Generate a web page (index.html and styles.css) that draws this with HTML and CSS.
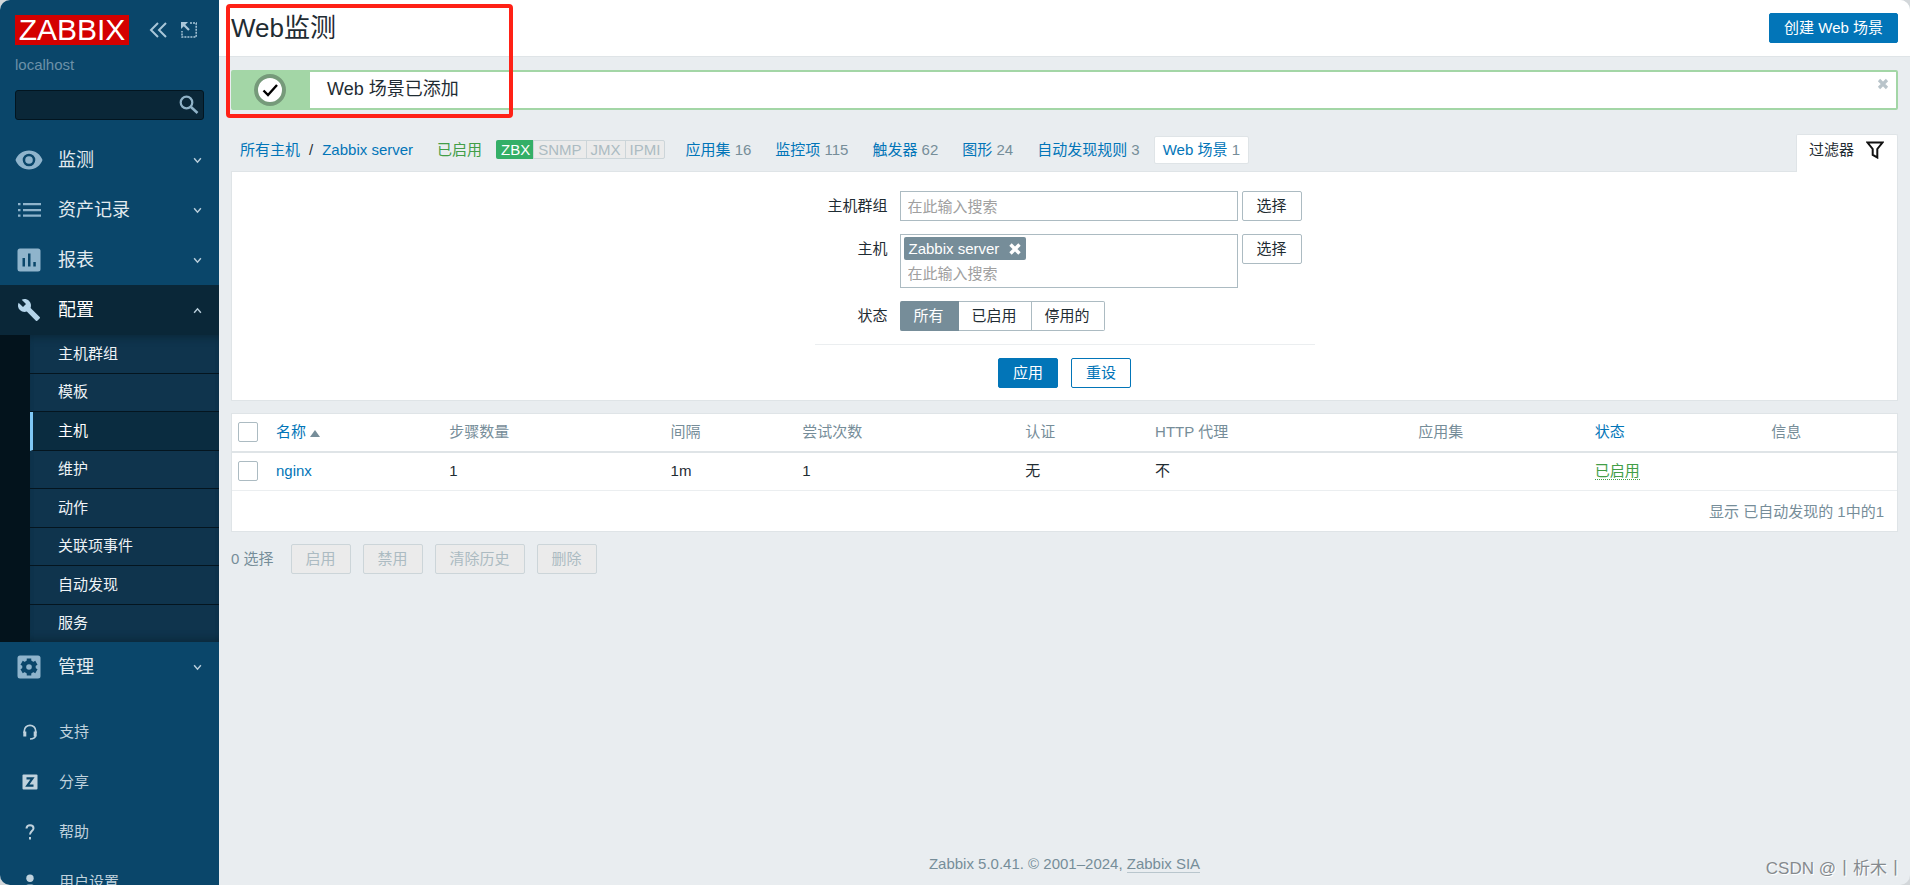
FILE: index.html
```html
<!DOCTYPE html>
<html lang="zh-CN">
<head>
<meta charset="utf-8">
<title>Web监测</title>
<link rel="stylesheet" href="styles.css">
</head>
<body>
<div class="page">
  <aside class="sidebar">
    <div class="sidebar-header">
      <a class="logo" href="#">ZABBIX</a>
      <button class="icon-button collapse" type="button" aria-label="折叠侧边栏">
        <svg width="20" height="16" viewBox="0 0 20 16" fill="none" stroke="#a9c6d8" stroke-width="2"><path d="M9 1 2 8l7 7M17 1l-7 7 7 7"/></svg>
      </button>
      <button class="icon-button" type="button" aria-label="隐藏侧边栏">
        <svg width="16" height="16" viewBox="0 0 16 16" fill="none" stroke="#a9c6d8"><path d="M9 1h6.200v14H1V9" stroke-width="1.500" stroke-dasharray="2 1"/><path d="M2 2l6 6" stroke-width="2.200"/><path d="M0 0h7L0 7z" fill="#a9c6d8" stroke="none"/></svg>
      </button>
    </div>
    <div class="server-name">localhost</div>
    <form class="search">
      <input type="text" aria-label="搜索">
      <button class="icon-button" type="button" aria-label="搜索">
        <svg width="20" height="20" viewBox="0 0 20 20" fill="none" stroke="#8fb2c7"><circle cx="7.500" cy="7.500" r="5.800" stroke-width="2.200"/><path d="m12 12 6.500 6" stroke-width="2.600"/></svg>
      </button>
    </form>
    <nav class="menu">
      <a class="menu-item" href="#">
        <svg class="menu-icon" viewBox="0 0 28 28" fill="#8fb4cc"><path fill-rule="evenodd" d="M14 4.500C7.500 4.500 2.500 8.500.5 14c2 5.500 7 9.500 13.500 9.500S25.500 19.500 27.500 14C25.500 8.500 20.500 4.500 14 4.500zm0 3.200a6.300 6.300 0 1 1 0 12.600 6.300 6.300 0 0 1 0-12.600z"/><circle cx="14" cy="14" r="3.800"/></svg>
        <span>监测</span>
        <svg class="chevron" viewBox="0 0 8 8"><path d="m1 2 3 3.500L7 2"/></svg>
      </a>
      <a class="menu-item" href="#">
        <svg class="menu-icon" viewBox="0 0 28 28" fill="#8fb4cc"><path d="M3 7h2.500v2.300H3zM8 7h18v2.300H8zM3 13h2.500v2.300H3zM8 13h18v2.300H8zM3 18.500h2.500v2.300H3zM8 18.500h18v2.300H8z"/></svg>
        <span>资产记录</span>
        <svg class="chevron" viewBox="0 0 8 8"><path d="m1 2 3 3.500L7 2"/></svg>
      </a>
      <a class="menu-item" href="#">
        <svg class="menu-icon" viewBox="0 0 28 28"><rect x="2.500" y="2.500" width="23" height="23" rx="2.500" fill="#8fb4cc"/><path d="M7.500 12h2.500v8.500H7.500zM13 7.500h2.500v13H13zM18.300 16h2.500v4.500h-2.500z" fill="#0a466a"/></svg>
        <span>报表</span>
        <svg class="chevron" viewBox="0 0 8 8"><path d="m1 2 3 3.500L7 2"/></svg>
      </a>
      <a class="menu-item open" href="#">
        <svg class="menu-icon" viewBox="0 0 24 24" fill="#b5d5ea"><path d="M22.700 19l-9.100-9.100c.9-2.300.4-5-1.500-6.900-2-2-5-2.400-7.400-1.300L9 6 6 9 1.600 4.700C.4 7.100.9 10.100 2.900 12.100c1.900 1.900 4.600 2.400 6.900 1.500l9.100 9.100c.4.400 1 .4 1.400 0l2.300-2.300c.5-.4.500-1.100.1-1.400z"/></svg>
        <span>配置</span>
        <svg class="chevron" viewBox="0 0 8 8"><path d="m1 6 3-3.500L7 6"/></svg>
      </a>
      <div class="submenu">
        <a href="#">主机群组</a>
        <a href="#">模板</a>
        <a class="current" href="#">主机</a>
        <a href="#">维护</a>
        <a href="#">动作</a>
        <a href="#">关联项事件</a>
        <a href="#">自动发现</a>
        <a href="#">服务</a>
      </div>
      <a class="menu-item" href="#">
        <svg class="menu-icon" viewBox="0 0 28 28"><rect x="2.500" y="2.500" width="23" height="23" rx="2.500" fill="#8fb4cc"/><circle cx="14" cy="14" r="6.800" fill="#0a466a"/><path d="M14 5.500v17M6.600 9.700l14.800 8.600M6.600 18.300l14.800-8.600" stroke="#0a466a" stroke-width="4.500"/><circle cx="14" cy="14" r="2.800" fill="#8fb4cc"/></svg>
        <span>管理</span>
        <svg class="chevron" viewBox="0 0 8 8"><path d="m1 2 3 3.500L7 2"/></svg>
      </a>
    </nav>
    <nav class="user-menu">
      <a href="#"><svg viewBox="0 0 16 16" fill="none" stroke="#c0d2dd"><path d="M2.300 9V7a5.700 5.700 0 0 1 11.400 0v2" stroke-width="1.700"/><path d="M2.800 7.500v5M13.200 7.500v5" stroke-width="3"/><path d="M13.500 12c-.5 2-2 2.800-5.500 3" stroke-width="1.600"/></svg><span>支持</span></a>
      <a href="#"><svg viewBox="0 0 16 16"><rect x=".5" y=".5" width="15" height="15" rx="1" fill="#c0d2dd"/><path d="M4.500 4.300h6l-5.200 7.400h6.200" fill="none" stroke="#0a466a" stroke-width="2.200"/></svg><span>分享</span></a>
      <a href="#"><svg viewBox="0 0 16 16" fill="none" stroke="#c0d2dd" stroke-width="2"><path d="M4.500 4.500C4.500 2.500 6 1.200 8 1.200s3.500 1.200 3.500 3c0 2.800-3.500 3-3.500 6.300M8 13v2.500"/></svg><span>帮助</span></a>
      <a href="#"><svg viewBox="0 0 16 16" fill="#c0d2dd"><circle cx="8" cy="4.200" r="3.700"/><path d="M1 16c0-4 2.500-5.500 7-5.500s7 1.500 7 5.500z"/></svg><span>用户设置</span></a>
    </nav>
  </aside>

  <div class="wrapper">
    <header class="page-header">
      <h1>Web监测</h1>
      <button class="button primary" type="button">创建 Web 场景</button>
    </header>
    <main class="content">
      <div class="message" role="status">
        <div class="message-icon">
          <svg width="32" height="32" viewBox="0 0 32 32"><circle cx="16" cy="16" r="14" fill="#fff" stroke="#769a7a" stroke-width="4"/><path d="m9.500 16.500 4.500 4.500 9-10" fill="none" stroke="#000" stroke-width="2.400"/></svg>
        </div>
        <p>Web 场景已添加</p>
        <button class="icon-button close" type="button" aria-label="关闭">
          <svg width="12" height="12" viewBox="0 0 12 12"><path d="m2 2 8 8m0-8-8 8" stroke="#b9c4ca" stroke-width="3.200"/></svg>
        </button>
      </div>

      <div class="nav-row">
        <nav class="host-nav">
          <span class="crumbs"><a href="#">所有主机</a><span>/</span><a href="#">Zabbix server</a></span>
          <span class="enabled">已启用</span>
          <span class="availability"><span class="on">ZBX</span><span>SNMP</span><span>JMX</span><span>IPMI</span></span>
          <span class="counts">
            <span><a href="#">应用集</a> 16</span>
            <span><a href="#">监控项</a> 115</span>
            <span><a href="#">触发器</a> 62</span>
            <span><a href="#">图形</a> 24</span>
            <span><a href="#">自动发现规则</a> 3</span>
          </span>
          <span class="selected"><a href="#">Web 场景</a> 1</span>
        </nav>
        <button class="filter-tab" type="button">过滤器
          <svg width="18" height="18" viewBox="0 0 18 18" fill="none" stroke="#111" stroke-width="2"><path d="M1.500 1.500h15L11.300 8v8.500L6.700 14V8z"/></svg>
        </button>
      </div>

      <form class="filter">
        <div class="fields">
          <label for="groups">主机群组</label>
          <div class="field">
            <div class="multiselect"><input id="groups" type="text" placeholder="在此输入搜索"></div>
            <button class="button" type="button">选择</button>
          </div>
          <label for="hosts">主机</label>
          <div class="field">
            <div class="multiselect">
              <span class="tag">Zabbix server
                <button class="icon-button" type="button" aria-label="移除"><svg width="12" height="12" viewBox="0 0 12 12"><path d="m1.500 1.500 9 9m0-9-9 9" stroke="#fff" stroke-width="3.400"/></svg></button>
              </span>
              <input id="hosts" type="text" placeholder="在此输入搜索">
            </div>
            <button class="button" type="button">选择</button>
          </div>
          <span class="label" id="status-label">状态</span>
          <div class="segmented" role="radiogroup" aria-labelledby="status-label">
            <input type="radio" name="status" id="s-all" checked><label for="s-all">所有</label>
            <input type="radio" name="status" id="s-on"><label for="s-on">已启用</label>
            <input type="radio" name="status" id="s-off"><label for="s-off">停用的</label>
          </div>
        </div>
        <div class="filter-actions">
          <button class="button primary" type="button">应用</button>
          <button class="button outline" type="button">重设</button>
        </div>
      </form>

      <div class="list">
        <table>
          <colgroup><col class="c-check"><col class="c-name"><col class="c-steps"><col class="c-interval"><col class="c-attempts"><col class="c-auth"><col class="c-proxy"><col class="c-apps"><col class="c-status"><col></colgroup>
          <thead>
            <tr>
              <th><input type="checkbox" aria-label="全选"></th>
              <th><a href="#">名称<span class="sort"></span></a></th>
              <th>步骤数量</th><th>间隔</th><th>尝试次数</th><th>认证</th><th>HTTP 代理</th><th>应用集</th>
              <th><a href="#">状态</a></th><th>信息</th>
            </tr>
          </thead>
          <tbody>
            <tr>
              <td><input type="checkbox" aria-label="nginx"></td>
              <td><a href="#">nginx</a></td>
              <td>1</td><td>1m</td><td>1</td><td>无</td><td>不</td><td></td>
              <td><a class="status-link" href="#">已启用</a></td><td></td>
            </tr>
          </tbody>
        </table>
        <div class="list-footer">显示 已自动发现的 1中的1</div>
      </div>

      <div class="bulk">
        <span>0 选择</span>
        <button class="button" type="button" disabled>启用</button>
        <button class="button" type="button" disabled>禁用</button>
        <button class="button" type="button" disabled>清除历史</button>
        <button class="button" type="button" disabled>删除</button>
      </div>
    </main>
    <footer class="page-footer">Zabbix 5.0.41. © 2001–2024, <a href="#">Zabbix SIA</a></footer>
  </div>
  <div class="highlight"></div>
  <div class="watermark">CSDN @丨析木丨</div>
</div>
</body>
</html>
```
FILE: styles.css
```css
* { box-sizing: border-box; }

html { background: #d3d7da; }

body {
  margin: 0;
  font: 15px/20px "Liberation Sans", "Noto Sans CJK SC", sans-serif;
  color: #1f2c33;
}

a { color: #0275b8; text-decoration: none; }

button, input { font: inherit; color: inherit; }

.page {
  position: relative;
  display: flex;
  height: 100vh;
  overflow: hidden;
  border-radius: 10px;
  background: #e9edf0;
}

.icon-button {
  display: flex;
  padding: 0;
  border: 0;
  background: none;
}

/* Sidebar */
.sidebar {
  flex: none;
  width: 219px;
  overflow: hidden;
  background: #0a466a;
}

.sidebar-header {
  display: flex;
  align-items: center;
  gap: 12px;
  padding: 15px 15px 0;
}

.logo {
  width: 114px;
  background: #d40000;
  color: #fff;
  font-size: 30px;
  line-height: 30px;
  text-align: center;
}

.collapse { margin-left: 8px; }

.server-name {
  padding: 10px 15px 15px;
  color: #6c91a8;
}

.search {
  display: flex;
  align-items: center;
  height: 30px;
  margin: 0 15px 15px;
  padding-right: 4px;
  border: 1px solid #021520;
  border-radius: 3px;
  background: #0a2738;
}

.search input {
  flex: 1;
  min-width: 0;
  border: 0;
  outline: 0;
  background: none;
  color: #fff;
}

.menu-item {
  display: flex;
  align-items: center;
  height: 50px;
  padding: 0 17px 0 15px;
  color: #e3ebf0;
  font-size: 18px;
}

.menu-item span { flex: 1; }

.menu-icon {
  width: 28px;
  height: 28px;
  margin-right: 15px;
}

.open .menu-icon {
  width: 24px;
  height: 24px;
  margin: 0 17px 0 2px;
}

.chevron {
  width: 9px;
  height: 9px;
  fill: none;
  stroke: #b8cdda;
  stroke-width: 1.3;
}

.menu-item.open {
  background: #0a2738;
  color: #fff;
}

.submenu {
  display: flex;
  flex-direction: column;
  height: 307px;
  border-left: 30px solid #03131c;
  background: #0f344d;
  box-shadow: inset 0 8px 8px -6px #0a2738, inset 0 -8px 8px -6px #0a2738;
}

.submenu a {
  display: flex;
  flex: 1;
  align-items: center;
  padding-left: 28px;
  border-bottom: 1px solid #04151f;
  color: #eef3f6;
}

.submenu a:last-child { border-bottom: 0; }

.submenu .current {
  padding-left: 25px;
  border-left: 3px solid #7fc8f5;
  background: #0a2c40;
  color: #fff;
}

.user-menu { padding-top: 15px; }

.user-menu a {
  display: flex;
  align-items: center;
  gap: 21px;
  height: 50px;
  padding-left: 22px;
  color: #c0d2dd;
}

.user-menu svg { width: 16px; height: 16px; }

/* Main column */
.wrapper {
  display: flex;
  flex: 1;
  flex-direction: column;
  min-width: 0;
}

.page-header {
  display: flex;
  align-items: center;
  justify-content: space-between;
  height: 57px;
  padding: 0 12px;
  border-bottom: 1px solid #dfe4e7;
  background: #fff;
}

h1 {
  margin: 0;
  font-size: 26px;
  font-weight: 400;
  line-height: 32px;
}

.button {
  height: 30px;
  padding: 0 14px;
  border: 1px solid #acbbc2;
  border-radius: 2px;
  background: #fff;
  white-space: nowrap;
}

.button.primary {
  border-color: #0275b8;
  background: #0275b8;
  color: #fff;
}

.button.outline { border-color: #0275b8; color: #0275b8; }

.button:disabled {
  border-color: #ccd5d9;
  background: #ebebeb;
  color: #acbbc2;
}

.content { padding: 13px 12px 0; }

.message {
  display: flex;
  height: 40px;
  border: 2px solid #a3d6a6;
  border-radius: 2px;
  background: #fff;
}

.message-icon {
  display: flex;
  align-items: center;
  justify-content: center;
  width: 77px;
  padding-right: 3px;
  background: #a3d6a6;
}

.message p {
  flex: 1;
  margin: 0;
  padding-left: 17px;
  font-size: 18px;
  line-height: 34px;
}

.close { padding: 6px 7px; align-items: flex-start; }

.nav-row {
  display: flex;
  align-items: flex-end;
  justify-content: space-between;
  margin-top: 24px;
}

.host-nav {
  display: flex;
  align-items: center;
  height: 37px;
  padding: 0 0 6px 9px;
  color: #768d99;
}

.crumbs, .counts { display: flex; }

.crumbs { gap: 9px; margin-right: 24px; }

.crumbs span { color: #1f2c33; }

.counts { gap: 24px; margin: 0 14px 0 20px; }

.enabled { margin-right: 14px; color: #429e47; }

.availability {
  display: flex;
  border: 1px solid #ccd5d9;
  border-radius: 2px;
  background: #ebebeb;
  color: #acbbc2;
  line-height: 17px;
}

.availability span { padding: 0 4px; }

.availability span + span { border-left: 1px solid #ccd5d9; }

.availability .on {
  margin: -1px 0 -1px -1px;
  padding: 1px 3px 1px 5px;
  border-radius: 2px 0 0 2px;
  background: #34af67;
  color: #fff;
}

.selected {
  padding: 3px 8px;
  border: 1px solid #dfe4e7;
  border-radius: 2px;
  background: #fff;
}

.filter-tab {
  display: flex;
  align-items: center;
  gap: 12px;
  height: 38px;
  margin-bottom: -1px;
  padding: 0 13px 8px 12px;
  border: 1px solid #dfe4e7;
  border-bottom: 0;
  border-radius: 2px 2px 0 0;
  background: #fff;
  z-index: 1;
}

.filter {
  display: flex;
  flex-direction: column;
  align-items: center;
  padding: 19px 0 12px;
  border: 1px solid #dfe4e7;
  background: #fff;
}

.fields {
  display: grid;
  grid-template-columns: 73px 1fr;
  gap: 13px 12px;
  width: 500px;
  padding-bottom: 13px;
  border-bottom: 1px solid #ebeef0;
}

.fields > label, .label { line-height: 30px; text-align: right; }

.field {
  display: flex;
  align-items: flex-start;
  gap: 4px;
}

.multiselect {
  display: flex;
  flex-direction: column;
  align-items: flex-start;
  width: 338px;
  padding: 2px 3px;
  border: 1px solid #acbbc2;
}

.multiselect input {
  width: 100%;
  height: 24px;
  padding: 0 4px;
  border: 0;
  outline: 0;
  background: none;
}

.multiselect input::placeholder { color: #a0a0a0; opacity: 1; }

.tag {
  display: flex;
  align-items: center;
  gap: 10px;
  height: 23px;
  margin-bottom: 1px;
  padding: 0 5px;
  border-radius: 2px;
  background: #768d99;
  color: #fff;
}

.segmented { display: flex; }

.segmented input {
  position: absolute;
  opacity: 0;
}

.segmented label {
  padding: 0 14px 0 13px;
  border: 1px solid #acbbc2;
  border-left-width: 0;
  line-height: 28px;
}

.segmented label:first-of-type { padding: 0 14px; border-radius: 2px 0 0 2px; }

.segmented label:last-of-type { border-radius: 0 2px 2px 0; }

.segmented input:checked + label {
  border-color: #768d99;
  background: #768d99;
  color: #fff;
}

.filter-actions { display: flex; gap: 13px; padding-top: 13px; }

/* Scenario list */
.list {
  margin-top: 12px;
  border: 1px solid #dfe4e7;
  background: #fff;
}

table {
  width: 100%;
  border-collapse: collapse;
  table-layout: fixed;
}

.c-check { width: 38px; }
.c-name { width: 10.4%; }
.c-steps { width: 13.3%; }
.c-interval { width: 7.9%; }
.c-attempts { width: 13.4%; }
.c-auth { width: 7.8%; }
.c-proxy { width: 15.8%; }
.c-apps, .c-status { width: 10.6%; }

th, td {
  height: 38px;
  padding: 0 6px 1px;
  border-bottom: 1px solid #ebeef0;
  font-weight: 400;
  text-align: left;
}

th { border-bottom: 2px solid #dfe4e7; color: #768d99; }

td input, th input {
  display: block;
  width: 20px;
  height: 20px;
  margin: 0;
  border: 1px solid #acbbc2;
  border-radius: 2px;
  background: #fff;
  appearance: none;
}

.sort {
  display: inline-block;
  margin-left: 4px;
  border: 5px solid transparent;
  border-top: 0;
  border-bottom: 7px solid #768d99;
}

.status-link { border-bottom: 1px dotted #429e47; color: #429e47; }

.list-footer {
  padding: 11px 13px 9px;
  color: #768d99;
  text-align: right;
}

.bulk {
  display: flex;
  align-items: center;
  gap: 12px;
  margin-top: 12px;
  color: #768d99;
}

.bulk span { margin-right: 5px; }

.page-footer {
  margin-top: auto;
  padding-bottom: 11px;
  color: #768d99;
  text-align: center;
}

.page-footer a { border-bottom: 1px solid #b9c6cd; color: inherit; }

/* Annotations over the page */
.highlight {
  position: absolute;
  top: 4px;
  left: 226px;
  width: 287px;
  height: 114px;
  border: 4px solid #ff2116;
  border-radius: 4px;
}

.watermark {
  position: absolute;
  right: 6px;
  bottom: 6px;
  color: #858a8e;
  font-size: 17px;
  text-shadow: 1px 1px 0 #fff;
}
```
